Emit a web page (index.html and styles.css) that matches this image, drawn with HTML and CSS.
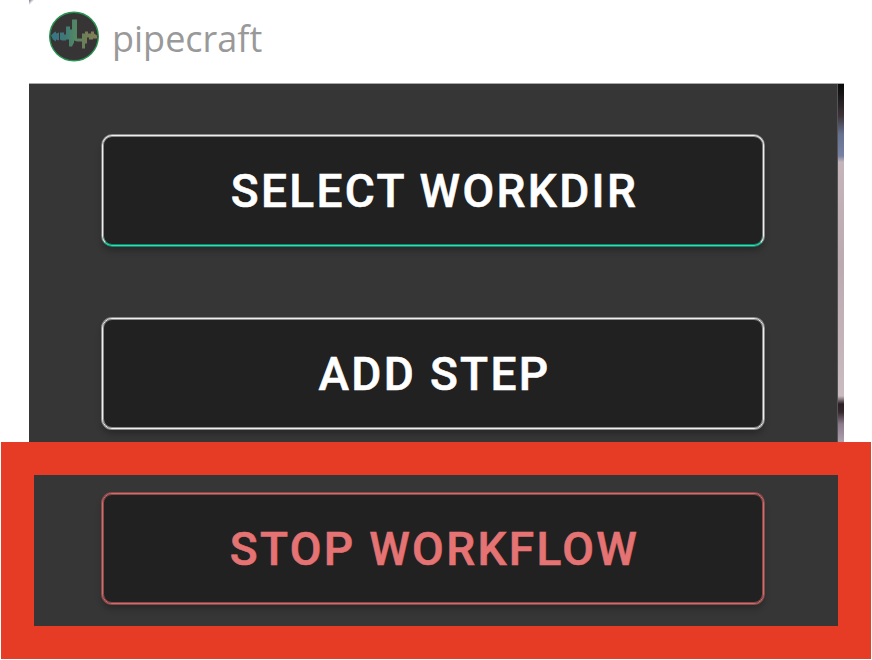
FILE: index.html
```html
<!DOCTYPE html>
<html lang="en">
<head>
<meta charset="utf-8">
<title>pipecraft</title>
<link rel="stylesheet" href="styles.css">
</head>
<body>
<div class="window">
  <header class="titlebar">
    <svg class="logo" viewBox="0 0 50 50">
      <defs>
        <linearGradient id="wave" x1="2" x2="48" y1="0" y2="0" gradientUnits="userSpaceOnUse">
          <stop offset="0" stop-color="#397488"/>
          <stop offset=".3" stop-color="#3f7778"/>
          <stop offset=".5" stop-color="#508765"/>
          <stop offset=".75" stop-color="#707e57"/>
          <stop offset="1" stop-color="#857f56"/>
        </linearGradient>
      </defs>
      <circle cx="25" cy="25" r="24.3" fill="#373435" stroke="#279551" stroke-width="1.4"/>
      <path fill="url(#wave)" d="M2 24L5 21L7 20V22L10 21V29L7 28V30L4 28ZM11 21H15V23H17V15H21V18H23V8H28V27H33V22H36V20H39V22H42V20H45V22L48 24V27H44V28H40V26H38V32H36V37H33V30H28L25 29V31L23 35H20V28H17V29H13L11 28Z"/>
    </svg>
    <span class="title">pipecraft</span>
  </header>
  <main class="content">
    <nav class="sidebar">
      <button class="btn btn-workdir">SELECT WORKDIR</button>
      <button class="btn btn-step">ADD STEP</button>
    </nav>
    <div class="backdrop"></div>
  </main>
</div>
<section class="highlight">
  <button class="btn btn-stop">STOP WORKFLOW</button>
</section>
</body>
</html>
```
FILE: styles.css
```css
* { box-sizing: border-box; }
body {
  margin: 0;
  width: 872px;
  height: 660px;
  overflow: hidden;
  background: #fff;
  display: flex;
  flex-direction: column;
}
.window {
  width: 815px;
  height: 442px;
  margin-left: 29px;
  flex: none;
  background: linear-gradient(135deg, #777383 0, #fff 4px);
}
.titlebar {
  height: 84px;
  padding: 11px 0 0 20px;
  border-bottom: 1px solid #aaa;
  display: flex;
  align-items: flex-start;
}
.logo { width: 50px; height: 51px; flex: none; }
.title {
  margin-left: 13px;
  font: 36px/56px "Open Sans", sans-serif;
  color: #999;
}
.content { height: 358px; display: flex; }
.sidebar {
  width: 809px;
  background: #363636;
  border-right: 1px solid #555;
  padding: 51px 0 0 73px;
  display: flex;
  flex-direction: column;
  gap: 72px;
}
.backdrop {
  flex: 1;
  background: linear-gradient(#090909 0, #171517 10px, #3d3439 32px, #66708f 50px, #7781a4 72px, #c5b4ba 78px, #bcaab1 180px, #c9bbc0 312px, #2a2025 320px, #34282d 328px, #8b7b8b 340px, #ad9eac 357px);
}
.btn {
  display: block;
  width: 662px;
  height: 111px;
  flex: none;
  padding: 2px 0 0 3px;
  border: 1px solid #eee;
  border-radius: 10px;
  background: #212121;
  color: #fff;
  font: 500 46px/107px Roboto, sans-serif;
  letter-spacing: 2.35px;
  -webkit-text-stroke: .6px currentColor;
  text-align: center;
  white-space: nowrap;
  box-shadow: 0 0 0 1px #8b8b8b, inset 0 0 0 1px #8b8b8b, 0 5px 6px rgba(0, 0, 0, .25);
}
.btn-workdir {
  border-bottom-color: #1de9b6;
  box-shadow: 0 1px 0 #1f8069, 0 -1px 0 #8b8b8b, 1px 0 0 #8b8b8b, -1px 0 0 #777,
    inset 0 -1px 0 #1f8069, inset 0 1px 0 #8b8b8b, inset 1px 0 0 #8b8b8b, inset -1px 0 0 #777,
    0 5px 6px rgba(0, 0, 0, .25);
}
.btn-stop {
  border-color: #d46a6a;
  color: #e57373;
  box-shadow: 0 0 0 1px #854b4b, inset 0 0 0 1px #854b4b, 0 5px 6px rgba(0, 0, 0, .25);
}
.highlight {
  width: 870px;
  height: 217px;
  margin-left: 1px;
  flex: none;
  border: 33px solid #e63c25;
  padding: 18px 0 0 68px;
  background: #363636;
}
```
